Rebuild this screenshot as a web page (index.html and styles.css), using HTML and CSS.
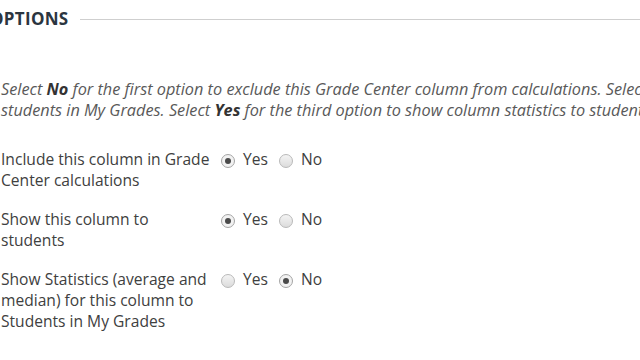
FILE: index.html
```html
<!DOCTYPE html>
<html>
<head>
<meta charset="utf-8">
<link rel="stylesheet" href="styles.css">
</head>
<body>
<div class="page">
  <div class="heading">
    <h2 class="title">OPTIONS</h2>
    <div class="rule"></div>
  </div>
  <p class="intro">
    <span class="line">Select <b>No</b> for the first option to exclude this Grade Center column from calculations. Select <b>No</b> for the second option to hide this column from</span>
    <span class="line">students in My Grades. Select <b>Yes</b> for the third option to show column statistics to students.</span>
  </p>
  <div class="rows">
    <div class="row">
      <div class="label">Include this column in Grade Center calculations</div>
      <div class="choices">
        <span class="radio checked"></span><span class="opt">Yes</span>
        <span class="radio"></span><span class="opt">No</span>
      </div>
    </div>
    <div class="row">
      <div class="label">Show this column to students</div>
      <div class="choices">
        <span class="radio checked"></span><span class="opt">Yes</span>
        <span class="radio"></span><span class="opt">No</span>
      </div>
    </div>
    <div class="row">
      <div class="label">Show Statistics (average and median) for this column to Students in My Grades</div>
      <div class="choices">
        <span class="radio"></span><span class="opt">Yes</span>
        <span class="radio checked"></span><span class="opt">No</span>
      </div>
    </div>
  </div>
</div>
</body>
</html>
```
FILE: styles.css
```css
html, body {
  margin: 0;
  padding: 0;
  background: #ffffff;
  overflow: hidden;
  width: 640px;
  height: 360px;
}
.page {
  font-family: "Open Sans", "Liberation Sans", sans-serif;
  color: #3f3f3f;
  padding-top: 6px;
}
.heading {
  display: flex;
  align-items: center;
  height: 26px;
}
.title {
  margin: 0 0 0 -10px;
  font-size: 17px;
  font-weight: 700;
  color: #2b3540;
  letter-spacing: 0.3px;
  line-height: 26px;
}
.rule {
  flex: 1;
  height: 1px;
  background: #cfcfcf;
  margin-left: 11px;
  margin-top: 1px;
}
.intro {
  margin: 47px 0 0 1px;
  font-style: italic;
  font-size: 16.3px;
  line-height: 21px;
  color: #595959;
  white-space: nowrap;
}
.intro .line {
  display: block;
}
.intro b {
  color: #333;
}
.rows {
  margin-top: 28px;
  display: flex;
  flex-direction: column;
  gap: 18.5px;
}
.row {
  display: flex;
  align-items: flex-start;
  font-size: 15.6px;
  line-height: 20.8px;
}
.label {
  width: 210px;
  padding-left: 1px;
  color: #404040;
}
.choices {
  display: flex;
  align-items: center;
  padding-left: 10px;
  height: 21px;
}
.radio {
  width: 14px;
  height: 14px;
  border-radius: 50%;
  border: 1px solid #b9b9b9;
  background: linear-gradient(#f4f4f4, #dcdcdc);
  box-sizing: border-box;
  display: inline-flex;
  align-items: center;
  justify-content: center;
  margin-top: 2px;
}
.radio.checked {
  background: #f2f2f2;
  border-color: #a5a5a5;
}
.radio.checked::after {
  content: "";
  width: 6px;
  height: 6px;
  border-radius: 50%;
  background: #4a4a4a;
}
.opt {
  margin-left: 8px;
  margin-right: 11px;
  color: #404040;
}
```
